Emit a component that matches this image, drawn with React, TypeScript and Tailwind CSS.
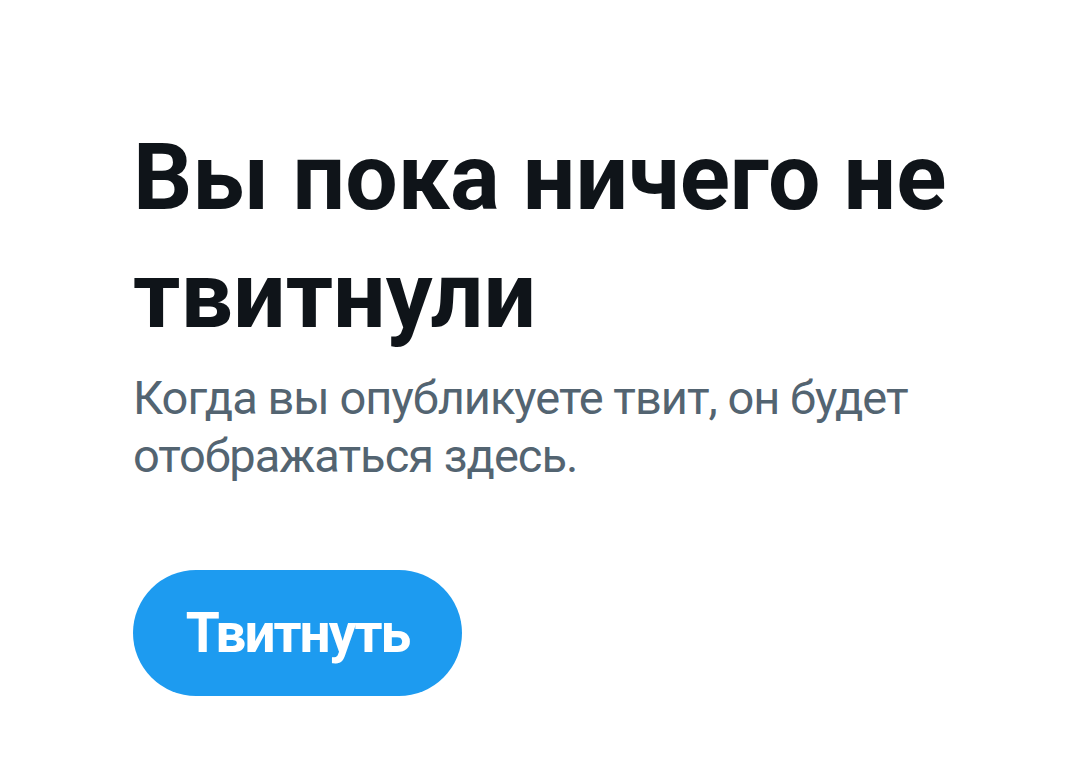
export default function App() {
  return (
    <div className="w-[1080px] h-[782px] bg-white" style={{ fontFamily: 'Roboto, "Noto Sans", sans-serif' }}>
      <div className="pl-[133px] pt-[119px] pr-[40px]">
        <h1 className="text-[93px] leading-[118px] font-bold text-[#0f1419] tracking-[0px]">
          Вы пока ничего не<br />твитнули
        </h1>
        <p className="mt-[14px] text-[47px] leading-[58px] text-[#536471] tracking-[-1px]">
          Когда вы опубликуете твит, он будет<br />отображаться здесь.
        </p>
        <button className="mt-[85px] w-[329px] h-[126px] rounded-full bg-[#1d9bf0] text-white text-[55px] font-bold tracking-[-2px] flex items-center justify-center">
          Твитнуть
        </button>
      </div>
    </div>
  );
}
